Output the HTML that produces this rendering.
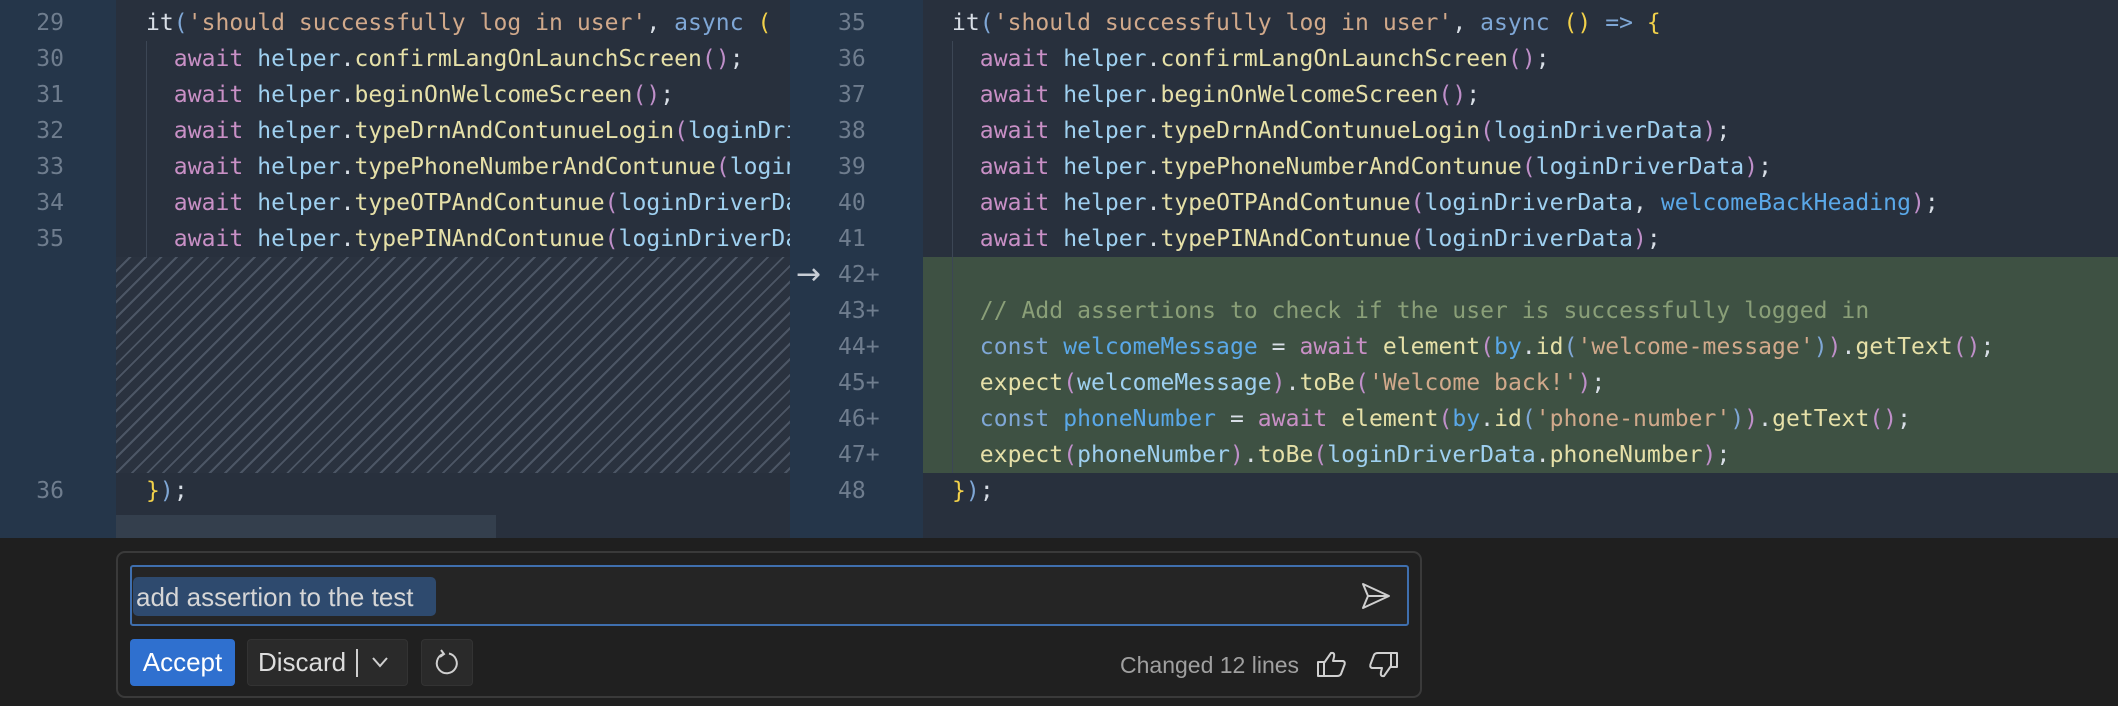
<!DOCTYPE html>
<html><head><meta charset="utf-8"><style>
body{margin:0;width:2118px;height:706px;overflow:hidden;background:#1f1f1f;position:relative;font-family:"DejaVu Sans Mono","Liberation Mono",monospace}
.a{position:absolute}
.code{font-size:23px;line-height:36px;white-space:pre;letter-spacing:0.05px}
.ln{color:#6f7d8e;text-align:right}
.k{color:#c990c6}.f{color:#e6e0a8}.v{color:#9fd0f0}.s{color:#d1a98b}.b{color:#7fa7d6}.p{color:#bf8fc9}.y{color:#f2d14a}.c{color:#8a9f78}.w{color:#d8dee6}.bl{color:#5aa8e8}
</style></head><body>
<!-- editor -->
<div class="a" style="left:0;top:0;width:2118px;height:538px;background:#28303d"></div>
<div class="a" style="left:0;top:0;width:116px;height:538px;background:#25364a"></div>
<div class="a" style="left:790px;top:0;width:133px;height:538px;background:#25364a"></div>
<div class="a" style="left:116px;top:257px;width:674px;height:216px;background:repeating-linear-gradient(135deg,#2a323f 0 9px,#4c5665 9px 11px)"></div>
<div class="a" style="left:923px;top:257px;width:1195px;height:216px;background:#3e5143"></div>
<div class="a" style="left:116px;top:515px;width:380px;height:23px;background:#343f4d"></div>
<div class="a" style="left:146px;top:41px;width:1px;height:216px;background:#3c4655"></div>
<div class="a" style="left:952px;top:41px;width:1px;height:432px;background:#3c4655"></div>

<div class="a code ln" style="left:0;top:5px;width:64px">29
30
31
32
33
34
35






36</div>
<div class="a code" style="left:146px;top:5px;width:644px;overflow:hidden"><span class="w">it</span><span class="b">(</span><span class="s">'should successfully log in user'</span><span class="w">, </span><span class="b">async</span> <span class="y">(</span>
<span class="k">  await</span> <span class="v">helper</span><span class="w">.</span><span class="f">confirmLangOnLaunchScreen</span><span class="p">()</span><span class="w">;</span>
<span class="k">  await</span> <span class="v">helper</span><span class="w">.</span><span class="f">beginOnWelcomeScreen</span><span class="p">()</span><span class="w">;</span>
<span class="k">  await</span> <span class="v">helper</span><span class="w">.</span><span class="f">typeDrnAndContunueLogin</span><span class="p">(</span><span class="v">loginDriverData</span>
<span class="k">  await</span> <span class="v">helper</span><span class="w">.</span><span class="f">typePhoneNumberAndContunue</span><span class="p">(</span><span class="v">loginDriverData</span>
<span class="k">  await</span> <span class="v">helper</span><span class="w">.</span><span class="f">typeOTPAndContunue</span><span class="p">(</span><span class="v">loginDriverData</span>
<span class="k">  await</span> <span class="v">helper</span><span class="w">.</span><span class="f">typePINAndContunue</span><span class="p">(</span><span class="v">loginDriverData</span>






<span class="y">}</span><span class="b">)</span><span class="w">;</span></div>

<div class="a" style="left:796px;top:260px;font-size:30px;line-height:30px;color:#c8ced6;font-family:'DejaVu Sans',sans-serif">→</div>
<div class="a code ln" style="left:790px;top:5px;width:90px;text-align:left;padding-left:48px">35
36
37
38
39
40
41
42+
43+
44+
45+
46+
47+
48</div>
<div class="a code" style="left:952px;top:5px"><span class="w">it</span><span class="b">(</span><span class="s">'should successfully log in user'</span><span class="w">, </span><span class="b">async</span> <span class="y">()</span> <span class="b">=&gt;</span> <span class="y">{</span>
<span class="k">  await</span> <span class="v">helper</span><span class="w">.</span><span class="f">confirmLangOnLaunchScreen</span><span class="p">()</span><span class="w">;</span>
<span class="k">  await</span> <span class="v">helper</span><span class="w">.</span><span class="f">beginOnWelcomeScreen</span><span class="p">()</span><span class="w">;</span>
<span class="k">  await</span> <span class="v">helper</span><span class="w">.</span><span class="f">typeDrnAndContunueLogin</span><span class="p">(</span><span class="v">loginDriverData</span><span class="p">)</span><span class="w">;</span>
<span class="k">  await</span> <span class="v">helper</span><span class="w">.</span><span class="f">typePhoneNumberAndContunue</span><span class="p">(</span><span class="v">loginDriverData</span><span class="p">)</span><span class="w">;</span>
<span class="k">  await</span> <span class="v">helper</span><span class="w">.</span><span class="f">typeOTPAndContunue</span><span class="p">(</span><span class="v">loginDriverData</span><span class="w">, </span><span class="bl">welcomeBackHeading</span><span class="p">)</span><span class="w">;</span>
<span class="k">  await</span> <span class="v">helper</span><span class="w">.</span><span class="f">typePINAndContunue</span><span class="p">(</span><span class="v">loginDriverData</span><span class="p">)</span><span class="w">;</span>

<span class="c">  // Add assertions to check if the user is successfully logged in</span>
<span class="b">  const</span> <span class="bl">welcomeMessage</span> <span class="w">=</span> <span class="k">await</span> <span class="f">element</span><span class="p">(</span><span class="bl">by</span><span class="w">.</span><span class="f">id</span><span class="b">(</span><span class="s">'welcome-message'</span><span class="b">)</span><span class="p">)</span><span class="w">.</span><span class="f">getText</span><span class="p">()</span><span class="w">;</span>
<span class="f">  expect</span><span class="p">(</span><span class="v">welcomeMessage</span><span class="p">)</span><span class="w">.</span><span class="f">toBe</span><span class="p">(</span><span class="s">'Welcome back!'</span><span class="p">)</span><span class="w">;</span>
<span class="b">  const</span> <span class="bl">phoneNumber</span> <span class="w">=</span> <span class="k">await</span> <span class="f">element</span><span class="p">(</span><span class="bl">by</span><span class="w">.</span><span class="f">id</span><span class="b">(</span><span class="s">'phone-number'</span><span class="b">)</span><span class="p">)</span><span class="w">.</span><span class="f">getText</span><span class="p">()</span><span class="w">;</span>
<span class="f">  expect</span><span class="p">(</span><span class="v">phoneNumber</span><span class="p">)</span><span class="w">.</span><span class="f">toBe</span><span class="p">(</span><span class="v">loginDriverData</span><span class="w">.</span><span class="f">phoneNumber</span><span class="p">)</span><span class="w">;</span>
<span class="y">}</span><span class="b">)</span><span class="w">;</span></div>

<!-- widget -->
<div class="a" style="left:116px;top:551px;width:1306px;height:147px;border:2px solid #3a3a3a;border-radius:9px;background:#202020;box-sizing:border-box"></div>
<div class="a" style="left:130px;top:565px;width:1279px;height:61px;border:2px solid #3f6fae;border-radius:3px;background:#252525;box-sizing:border-box"></div>
<div class="a" style="left:133px;top:577px;width:303px;height:39px;background:#2e4a6e;border-radius:5px"></div>
<div class="a" style="left:136px;top:580px;font:26px/34px 'Liberation Sans',sans-serif;color:#d6d6d6">add assertion to the test</div>
<svg class="a" style="left:1360px;top:581px" width="32" height="30" viewBox="0 0 32 30"><path d="M3 3 L29 15 L3 27 L8 15 Z M8 15 H29" fill="none" stroke="#cfcfcf" stroke-width="2" stroke-linejoin="round"/></svg>

<div class="a" style="left:130px;top:639px;width:105px;height:47px;background:#2f70cf;border-radius:4px;color:#fff;font:26px/47px 'Liberation Sans',sans-serif;text-align:center">Accept</div>
<div class="a" style="left:247px;top:639px;width:161px;height:47px;background:#2a2a2a;border:1px solid #333;box-sizing:border-box;border-radius:4px;color:#ddd;font:26px/45px 'Liberation Sans',sans-serif;padding-left:10px">Discard</div>
<div class="a" style="left:356px;top:649px;width:2px;height:28px;background:#cfcfcf"></div>
<svg class="a" style="left:370px;top:655px" width="20" height="14"><path d="M3 3 L10 11 L17 3" fill="none" stroke="#cfcfcf" stroke-width="2"/></svg>
<div class="a" style="left:421px;top:639px;width:52px;height:47px;background:#2a2a2a;border:1px solid #333;box-sizing:border-box;border-radius:4px"></div>
<svg class="a" style="left:432px;top:648px" width="30" height="30" viewBox="0 0 30 30"><path d="M11 6 A10 10 0 1 0 17 5.5" fill="none" stroke="#d0d0d0" stroke-width="2"/><path d="M9 2 L12 6 L8 9" fill="none" stroke="#d0d0d0" stroke-width="2"/></svg>

<div class="a" style="left:1120px;top:650px;font:23px/30px 'Liberation Sans',sans-serif;color:#a0a0a0">Changed 12 lines</div>
<svg class="a" style="left:1316px;top:649px" width="32" height="30" viewBox="0 0 32 30"><path d="M2 13 H8 V27 H2 Z M8 14 L15 4 Q19 3 18 8 L17 12 H27 Q30 13 28 17 L25 25 Q24 27 21 27 H8" fill="none" stroke="#d0d0d0" stroke-width="2" stroke-linejoin="round"/></svg>
<svg class="a" style="left:1367px;top:650px" width="32" height="30" viewBox="0 0 32 30"><path d="M30 17 H24 V3 H30 Z M24 16 L17 26 Q13 27 14 22 L15 18 H5 Q2 17 4 13 L7 5 Q8 3 11 3 H24" fill="none" stroke="#d0d0d0" stroke-width="2" stroke-linejoin="round"/></svg>
</body></html>
